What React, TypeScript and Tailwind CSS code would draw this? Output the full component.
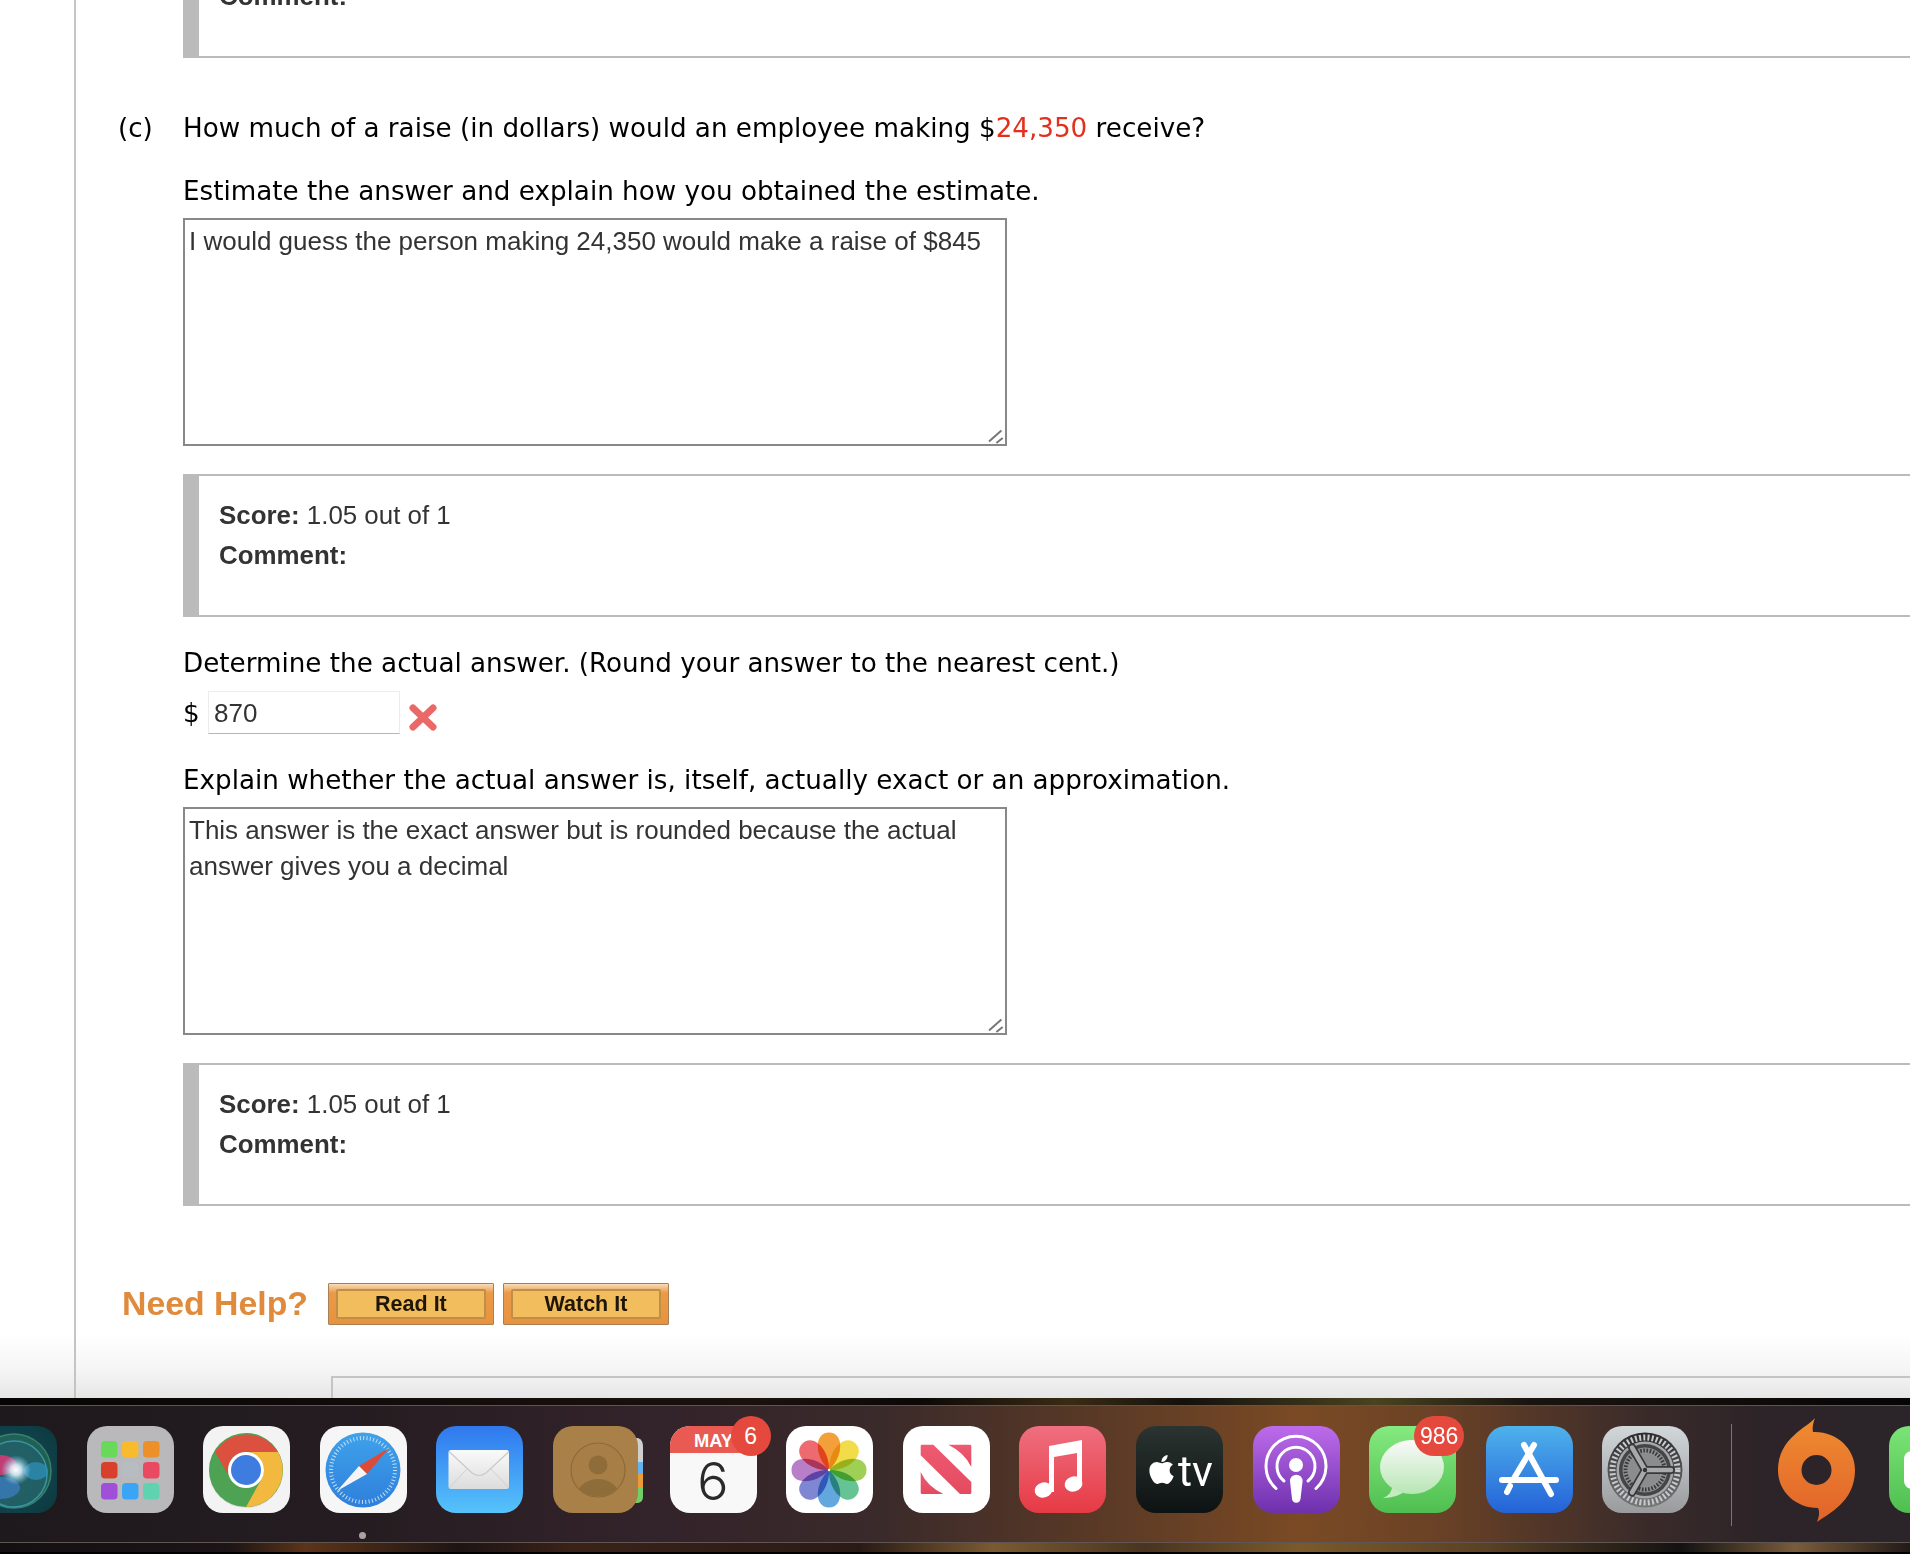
import React from "react";
import { FaApple } from "react-icons/fa";

const verdana = "font-['DejaVu_Sans',sans-serif] text-[26.2px] text-black leading-[36px]";
const arial = "font-['Liberation_Sans',sans-serif]";

function ScoreBox({ first }: { first?: boolean }) {
  return (
    <div className={`h-[143px] border-y-2 border-l-[16px] border-[#bbbbbb] pl-[20px] pt-[19px] ${arial} text-[25.9px] leading-[40px] text-[#333] ${first ? "-mt-[85px]" : "mt-[28px]"}`}>
      <div><b>Score:</b> 1.05 out of 1</div>
      <div><b>Comment:</b></div>
    </div>
  );
}

function Answer({ value }: { value: string }) {
  return (
    <div className="relative mt-[9px] h-[228px] w-[824px]">
      <textarea
        readOnly
        defaultValue={value}
        className={`block h-full w-full resize-none rounded-none border-2 border-[#888] bg-white px-[4px] py-[3px] ${arial} text-[26px] leading-[36px] text-[#333] outline-none`}
      />
      <svg viewBox="0 0 20 20" className="absolute bottom-0 right-0 h-[20px] w-[20px]">
        <path d="M2 15.5L14.4 4.4M9.4 17L15.7 12" stroke="#777" strokeWidth="2" fill="none" />
      </svg>
    </div>
  );
}

function HelpButton({ label }: { label: string }) {
  return (
    <div className="flex h-[42px] w-[166px] rounded-[1px] border border-[#a97f55] bg-[linear-gradient(180deg,#f8dcb8_0%,#ea9a48_22%,#e8923e_100%)] px-[7px] py-[5px]">
      <div className={`flex flex-1 items-center justify-center rounded-[2px] border-2 border-[#bf8f48] bg-[#f2bd5c] ${arial} text-[21.5px] font-bold text-[#1f1608]`}>
        {label}
      </div>
    </div>
  );
}

const iconCls = "block h-[87px] w-[87px] shrink-0 rounded-[20px]";

function Siri() {
  return (
    <svg viewBox="0 0 87 87" className={iconCls}>
      <defs>
        <radialGradient id="sbg" cx="0.45" cy="0.5" r="0.7">
          <stop offset="0" stopColor="#1a4a66" />
          <stop offset="1" stopColor="#0b3a3c" />
        </radialGradient>
        <radialGradient id="sglow" cx="0.5" cy="0.5" r="0.5">
          <stop offset="0" stopColor="#ffffff" />
          <stop offset="0.35" stopColor="#e4f6ff" stopOpacity="0.85" />
          <stop offset="1" stopColor="#7cd2ff" stopOpacity="0" />
        </radialGradient>
      </defs>
      <rect width="87" height="87" fill="url(#sbg)" />
      <circle cx="44" cy="45" r="37" fill="#2c7a5e" opacity="0.55" stroke="#58b88a" strokeWidth="1.5" />
      <circle cx="44" cy="48" r="33" fill="#24606e" opacity="0.6" stroke="#4bb6d8" strokeWidth="1.5" />
      <ellipse cx="30" cy="62" rx="20" ry="11" fill="#3f7fc8" opacity="0.7" />
      <ellipse cx="66" cy="45" rx="12" ry="9" fill="#2f8fb9" opacity="0.75" />
      <ellipse cx="30" cy="39" rx="17" ry="10" fill="#d43a74" opacity="0.9" />
      <circle cx="46" cy="44" r="15" fill="url(#sglow)" />
    </svg>
  );
}

function Launchpad() {
  const xs = [14, 35, 56];
  const ys = [15, 36, 57];
  const cs = [
    ["#69d95a", "#f8bb2e", "#ee9029"],
    ["#d9402c", "#b6bcc0", "#ea4a60"],
    ["#a04fd8", "#3aa5f5", "#5fd2b0"],
  ];
  return (
    <svg viewBox="0 0 87 87" className={iconCls}>
      <rect width="87" height="87" fill="#b9b8ba" />
      {ys.map((y, r) => xs.map((x, c) => <rect key={`${r}${c}`} x={x} y={y} width="16.5" height="16.5" rx="4" fill={cs[r][c]} />))}
    </svg>
  );
}

function Chrome() {
  return (
    <svg viewBox="0 0 87 87" className={iconCls}>
      <rect width="87" height="87" fill="#f3f3f3" />
      <circle cx="43" cy="45" r="37" fill="#dcdcdc" />
      <circle cx="43" cy="44" r="37" fill="#4da253" />
      <path d="M12 26A37 37 0 0 1 75 26L43 26A18 18 0 0 0 27 52Z" fill="#dc5040" />
      <path d="M75 26A37 37 0 0 1 43 81L59 52A18 18 0 0 0 43 26Z" fill="#f3b93e" />
      <circle cx="43" cy="44" r="18" fill="#fff" />
      <circle cx="43" cy="44" r="15" fill="#3f7ce0" />
    </svg>
  );
}

function Safari() {
  return (
    <svg viewBox="0 0 87 87" className={iconCls}>
      <defs>
        <linearGradient id="saf" x1="0" y1="0" x2="0" y2="1">
          <stop offset="0" stopColor="#3fa2ea" />
          <stop offset="1" stopColor="#2e7fdc" />
        </linearGradient>
      </defs>
      <rect width="87" height="87" fill="#f6f6f6" />
      <circle cx="43" cy="44" r="37.5" fill="url(#saf)" />
      <circle cx="43" cy="44" r="32" fill="none" stroke="#dcecf9" strokeWidth="4" strokeDasharray="1 2.35" opacity="0.85" />
      <path d="M69 22L47 48L39 40Z" fill="#de4a38" />
      <path d="M17 65L39 40L47 48Z" fill="#f4f4f4" />
    </svg>
  );
}

function Mail() {
  return (
    <svg viewBox="0 0 87 87" className={iconCls}>
      <defs>
        <linearGradient id="mail" x1="0" y1="0" x2="0" y2="1">
          <stop offset="0" stopColor="#2f78ee" />
          <stop offset="1" stopColor="#56c3fb" />
        </linearGradient>
        <linearGradient id="env" x1="0" y1="0" x2="0" y2="1">
          <stop offset="0" stopColor="#fafafa" />
          <stop offset="1" stopColor="#dcdcdc" />
        </linearGradient>
      </defs>
      <rect width="87" height="87" fill="url(#mail)" />
      <rect x="12.5" y="24" width="60.5" height="39" rx="2.5" fill="url(#env)" />
      <path d="M13 25.5L36 47Q43 52 50 47L73 25.5" fill="none" stroke="#c9c9c9" strokeWidth="1.2" />
      <path d="M13 62L32 42M73 62L54 42" fill="none" stroke="#cfcfcf" strokeWidth="1" />
    </svg>
  );
}

function Contacts() {
  return (
    <svg viewBox="0 0 91 87" className="block h-[87px] w-[91px] shrink-0">
      <defs>
        <clipPath id="cc"><circle cx="45" cy="44" r="26.5" /></clipPath>
      </defs>
      <path d="M82 12H85Q90 14 90 20V36H82Z" fill="#cfcfcf" />
      <rect x="82" y="36" width="8" height="12" fill="#63b4ee" />
      <rect x="82" y="48" width="8" height="13" fill="#ef9a38" />
      <path d="M82 61H90V71Q90 76 85 77H82Z" fill="#6fcf68" />
      <rect x="0" y="0" width="85" height="87" rx="20" fill="#a98148" />
      <circle cx="45" cy="44" r="27" fill="#a77f46" stroke="#8c6a38" strokeWidth="1.2" />
      <circle cx="45" cy="39" r="9.5" fill="#8f6d3b" />
      <ellipse cx="45" cy="72" rx="22" ry="19" fill="#8f6d3b" clipPath="url(#cc)" />
    </svg>
  );
}

function Calendar() {
  return (
    <svg viewBox="0 0 87 87" className={iconCls}>
      <rect width="87" height="87" fill="#f8f8f8" />
      <rect width="87" height="27" fill="#e95a52" />
      <text x="24" y="21" textLength="39" lengthAdjust="spacingAndGlyphs" fontFamily="'Liberation Sans',sans-serif" fontWeight="700" fontSize="18.7" fill="#fff">MAY</text>
      <text x="43" y="74" textAnchor="middle" fontFamily="Inter,sans-serif" fontWeight="300" fontSize="52" fill="#2a2a2a">6</text>
    </svg>
  );
}

function Photos() {
  const colors = ["#f3a03a", "#f3dc4a", "#9fcf55", "#66c394", "#62a8de", "#7f86d2", "#b87fc8", "#ec6a70"];
  return (
    <svg viewBox="0 0 87 87" className={iconCls}>
      <rect width="87" height="87" fill="#fff" />
      {colors.map((c, i) => (
        <path key={c} d="M43 44C28 30 28 6.5 43 6.5C58 6.5 58 30 43 44Z" fill={c} className="mix-blend-multiply" transform={`rotate(${i * 45} 43 44)`} />
      ))}
      <circle cx="43" cy="44" r="1.2" fill="#fff" />
    </svg>
  );
}

function News() {
  return (
    <svg viewBox="0 0 87 87" className={iconCls}>
      <defs>
        <linearGradient id="nws" x1="0" y1="0" x2="0" y2="1">
          <stop offset="0" stopColor="#ee5b72" />
          <stop offset="1" stopColor="#e44a60" />
        </linearGradient>
      </defs>
      <rect width="87" height="87" fill="#fff" />
      <path d="M19 18.7H30.3L68.3 56V66.5Q68.3 68 67 68H57L17.7 29.3V20Q17.7 18.7 19 18.7Z" fill="url(#nws)" />
      <path d="M45.3 18.7H67Q68.3 18.7 68.3 20V41Q62 27 45.3 18.7Z" fill="url(#nws)" />
      <path d="M17.7 46Q24 60 40.3 68H19Q17.7 68 17.7 66.7Z" fill="url(#nws)" />
    </svg>
  );
}

function Music() {
  return (
    <svg viewBox="0 0 87 87" className={iconCls}>
      <defs>
        <linearGradient id="mus" x1="0" y1="0" x2="0" y2="1">
          <stop offset="0" stopColor="#ef6f80" />
          <stop offset="1" stopColor="#e63a44" />
        </linearGradient>
      </defs>
      <rect width="87" height="87" fill="url(#mus)" />
      <path d="M30 20L63 14V58H58V27L35 31V66H30Z" fill="#fff" />
      <ellipse cx="24.5" cy="64" rx="9" ry="7.5" fill="#fff" transform="rotate(-15 24.5 64)" />
      <ellipse cx="54.5" cy="58" rx="9" ry="7.5" fill="#fff" transform="rotate(-15 54.5 58)" />
    </svg>
  );
}

function Tv() {
  return (
    <div className="flex h-[87px] w-[87px] shrink-0 items-center justify-center gap-[1px] rounded-[20px] bg-[linear-gradient(180deg,#2b3431_0%,#0d1212_100%)] pt-[3px] text-white">
      <FaApple className="mb-[4px] h-[33px] w-[31px]" />
      <span className="font-['Roboto',sans-serif] text-[43px] font-normal leading-none">tv</span>
    </div>
  );
}

function Podcasts() {
  return (
    <svg viewBox="0 0 87 87" className={iconCls}>
      <defs>
        <linearGradient id="pod" x1="0" y1="0" x2="0" y2="1">
          <stop offset="0" stopColor="#bd6ceb" />
          <stop offset="1" stopColor="#6e30ad" />
        </linearGradient>
      </defs>
      <rect width="87" height="87" fill="url(#pod)" />
      <path d="M23 62.5A30 30 0 1 1 63 62.5" fill="none" stroke="#fff" strokeWidth="3" strokeLinecap="round" />
      <path d="M31 55A19 19 0 1 1 55 55" fill="none" stroke="#fff" strokeWidth="3" strokeLinecap="round" />
      <circle cx="43" cy="39" r="7" fill="#fff" />
      <path d="M37 55A6.3 6.3 0 0 1 49.6 55L47.5 73A4.3 4.3 0 0 1 39 73Z" fill="#fff" />
    </svg>
  );
}

function Messages() {
  return (
    <svg viewBox="0 0 87 87" className={iconCls}>
      <defs>
        <linearGradient id="msg" x1="0" y1="0" x2="0" y2="1">
          <stop offset="0" stopColor="#85ea80" />
          <stop offset="1" stopColor="#4fbe50" />
        </linearGradient>
        <linearGradient id="bub" x1="0" y1="0" x2="0" y2="1">
          <stop offset="0" stopColor="#fafafa" />
          <stop offset="1" stopColor="#b8e6b4" />
        </linearGradient>
      </defs>
      <rect width="87" height="87" fill="url(#msg)" />
      <path d="M23 58Q24 68 14 72Q28 72 36 65Z" fill="#c4ecc0" />
      <ellipse cx="43" cy="41" rx="32" ry="27" fill="url(#bub)" />
    </svg>
  );
}

function AppStore() {
  return (
    <svg viewBox="0 0 87 87" className={iconCls}>
      <defs>
        <linearGradient id="app" x1="0" y1="0" x2="0" y2="1">
          <stop offset="0" stopColor="#4eb2ec" />
          <stop offset="1" stopColor="#2462d8" />
        </linearGradient>
      </defs>
      <rect width="87" height="87" fill="url(#app)" />
      <g stroke="#fff" strokeWidth="6" strokeLinecap="round" fill="none">
        <path d="M38 19L65 68" />
        <path d="M48 19L27 54M24 60L21 66" />
        <path d="M16 54H70" />
      </g>
    </svg>
  );
}

function Settings() {
  return (
    <svg viewBox="0 0 87 87" className={iconCls}>
      <defs>
        <linearGradient id="set" x1="0" y1="0" x2="0" y2="1">
          <stop offset="0" stopColor="#d2d7da" />
          <stop offset="1" stopColor="#999b9d" />
        </linearGradient>
        <linearGradient id="setr" x1="0" y1="0" x2="0" y2="1">
          <stop offset="0" stopColor="#2c2c2e" />
          <stop offset="1" stopColor="#77787a" />
        </linearGradient>
      </defs>
      <rect width="87" height="87" fill="url(#set)" />
      <circle cx="43" cy="44" r="37.5" fill="url(#setr)" />
      <circle cx="43" cy="44" r="32.5" fill="none" stroke="#c9cacc" strokeWidth="6" strokeDasharray="2 2.2" />
      <circle cx="43" cy="44" r="28.5" fill="#a6a7a9" />
      <circle cx="43" cy="44" r="26" fill="#454547" />
      <circle cx="43" cy="44" r="22.5" fill="#8e8f91" />
      <circle cx="43" cy="44" r="19.5" fill="none" stroke="#3a3a3c" strokeWidth="4" strokeDasharray="1.6 1.6" />
      <circle cx="43" cy="44" r="16" fill="#8b8c8e" />
      <g stroke="#38383a" strokeWidth="8" strokeLinecap="round">
        <path d="M43 44L30 21.5" />
        <path d="M43 44L69 44" />
        <path d="M43 44L30 66.5" />
      </g>
      <g stroke="#a8a9ab" strokeWidth="4.5" strokeLinecap="round">
        <path d="M43 44L30 21.5" />
        <path d="M43 44L69 44" />
        <path d="M43 44L30 66.5" />
      </g>
      <circle cx="43" cy="44" r="2.2" fill="#333436" />
    </svg>
  );
}

function Origin() {
  return (
    <svg viewBox="0 0 77 104" className="-mt-[8px] block h-[104px] w-[77px] shrink-0">
      <defs>
        <linearGradient id="ori" x1="0" y1="0" x2="0" y2="1">
          <stop offset="0" stopColor="#ef8c30" />
          <stop offset="1" stopColor="#e1632a" />
        </linearGradient>
      </defs>
      <path
        fillRule="evenodd"
        fill="url(#ori)"
        d="M37 0C30 9 0 20 0 52C0 74 18 90 40 90C42 94 41 99 39 104C50 96 77 84 77 52C77 30 58 13 35 14C34 10 35 5 37 0ZM38.5 37A15 15 0 1 1 38.5 67A15 15 0 1 1 38.5 37Z"
      />
    </svg>
  );
}

function Badge({ text, cls }: { text: string; cls: string }) {
  return (
    <span className={`absolute flex h-[40px] items-center justify-center rounded-full bg-[#e5493d] ${arial} text-[23px] text-white ${cls}`}>{text}</span>
  );
}

export default function App() {
  return (
    <div className="flex h-[1554px] w-[1910px] flex-col overflow-hidden bg-black">
      <main className="h-[1398px] shrink-0 overflow-hidden bg-[linear-gradient(180deg,#ffffff_0px,#ffffff_1335px,#f5f5f5_1370px,#e6e6e6_1398px)] pl-[74px]">
        <div className="h-full border-l-2 border-[#c4c4c4] pl-[42px]">
          <div className="flex">
            <div className={`mt-[110px] w-[65px] shrink-0 ${verdana}`}>(c)</div>
            <div className="min-w-0 flex-1">
              <ScoreBox first />
              <p className={`mt-[52px] ${verdana}`}>
                How much of a raise (in dollars) would an employee making $<span className="text-[#e1301e]">24,350</span> receive?
              </p>
              <p className={`mt-[27px] ${verdana}`}>Estimate the answer and explain how you obtained the estimate.</p>
              <Answer value="I would guess the person making 24,350 would make a raise of $845" />
              <ScoreBox />
              <p className={`mt-[28px] ${verdana}`}>Determine the actual answer. (Round your answer to the nearest cent.)</p>
              <div className="mt-[10px] flex h-[43px] items-start">
                <span className={`w-[25px] ${verdana} leading-[44px]`}>$</span>
                <div className={`flex h-[43px] w-[192px] items-center border border-[#ececec] border-b-[#b5b5b5] pl-[5px] pt-[1px] ${arial} text-[26px] text-[#333]`}>870</div>
                <svg viewBox="0 0 28 27" className="ml-[9px] mt-[13px] h-[27px] w-[28px]">
                  <path d="M4 4L24 23M24 4L4 23" stroke="#ea6868" strokeWidth="7" strokeLinecap="round" />
                </svg>
              </div>
              <p className={`mt-[28px] ${verdana}`}>Explain whether the actual answer is, itself, actually exact or an approximation.</p>
              <Answer value={"This answer is the exact answer but is rounded because the actual answer gives you a decimal"} />
              <ScoreBox />
            </div>
          </div>
          <div className="mt-[77px] flex h-[42px] items-center pl-[4px]">
            <span className={`${arial} mb-[2px] text-[33.8px] font-bold text-[#e08a3c]`}>Need Help?</span>
            <div className="ml-[20px] flex gap-[9px]">
              <HelpButton label="Read It" />
              <HelpButton label="Watch It" />
            </div>
          </div>
          <div className="ml-[213px] mt-[51px] h-[40px] border-l-2 border-t-2 border-[#c4c4c4]" />
        </div>
      </main>
      <div className="h-[7px] shrink-0 bg-[linear-gradient(90deg,#060404_0%,#120c0a_20%,#1a110d_40%,#0b0807_48%,#3a2c14_56%,#14100c_62%,#4a4320_72%,#1a1410_80%,#060505_100%)]" />
      <div className="relative flex h-[138px] shrink-0 items-start gap-[29.6px] border-y border-[#5f5654] bg-[linear-gradient(90deg,#1e191d_0%,#241c20_18%,#33232a_34%,#3a2a2a_46%,#5b3a26_58%,#7a4a24_68%,#6b4226_75%,#3a2b2a_86%,#2d2428_92%,#2b2428_100%)] pt-[20px]">
        <div className="-ml-[30px]"><Siri /></div>
        <Launchpad />
        <Chrome />
        <div className="relative">
          <Safari />
          <span className="absolute left-[39px] top-[106px] h-[7px] w-[7px] rounded-full bg-[#a9a3a5]" />
        </div>
        <Mail />
        <Contacts />
        <div className="relative -ml-[4px]">
          <Calendar />
          <Badge text="6" cls="-right-[14px] -top-[10px] w-[40px]" />
        </div>
        <Photos />
        <News />
        <Music />
        <Tv />
        <Podcasts />
        <div className="relative">
          <Messages />
          <Badge text="986" cls="-right-[8px] -top-[10px] w-[50px]" />
        </div>
        <AppStore />
        <Settings />
        <span className="-mt-[2px] ml-[12px] h-[102px] w-[1.5px] shrink-0 bg-[#7a7478]" />
        <div className="ml-[16px]"><Origin /></div>
        <div className="ml-[4px] flex h-[87px] w-[87px] shrink-0 items-center rounded-[20px] bg-[linear-gradient(180deg,#7ce477_0%,#4fbe50_100%)] pl-[15px]">
          <div className="h-[38px] w-[40px] rounded-[8px] bg-white" />
        </div>
      </div>
      <div className="h-[9px] shrink-0 bg-[linear-gradient(90deg,#141012_0%,#1c1416_12%,#5c3418_16%,#1e1414_24%,#3a2218_30%,#2a1a16_45%,#7a5a30_52%,#4a3420_60%,#7a5a2c_68%,#5a4024_78%,#121212_88%,#7a5c3a_94%,#221a18_100%)]" />
    </div>
  );
}
